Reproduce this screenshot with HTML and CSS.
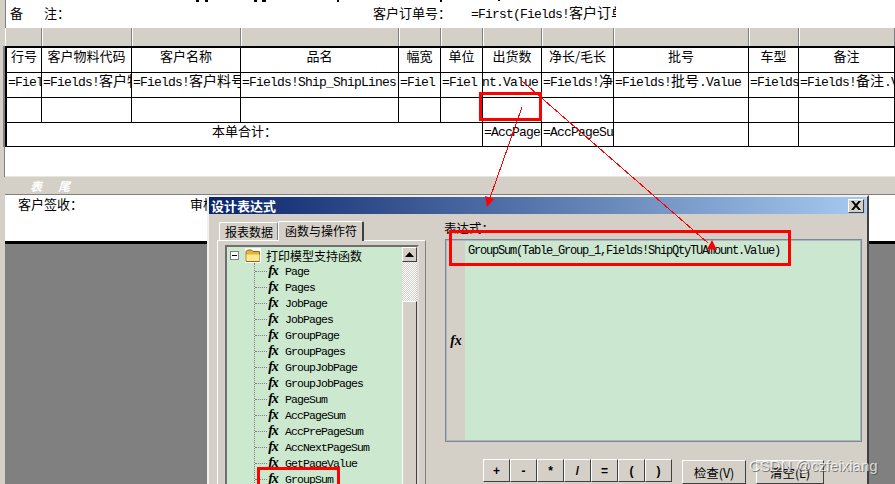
FILE: index.html
```html
<!DOCTYPE html>
<html lang="zh-CN">
<head>
<meta charset="utf-8">
<title>设计表达式</title>
<link rel="stylesheet" href="styles.css">
</head>
<body>
<div class="screen">
  <div class="report">
    <div class="head-line">
      <span class="note-a">备</span><span class="note-b">注：</span>
      <span class="order-label">客户订单号：</span>
      <span class="order-value">=First(Fields!<span class="zh">客户订单</span></span>
    </div>
    <div class="ruler">
      <i></i><i></i><i></i><i></i><i></i><i></i><i></i><i></i><i></i><i></i><i></i>
    </div>
    <div class="grid">
      <div class="cell hd">行号</div><div class="cell hd">客户物料代码</div><div class="cell hd">客户名称</div><div class="cell hd">品名</div><div class="cell hd">幅宽</div><div class="cell hd">单位</div><div class="cell hd">出货数</div><div class="cell hd">净长/毛长</div><div class="cell hd">批号</div><div class="cell hd">车型</div><div class="cell hd">备注</div>
      <div class="cell ex">=Fields</div><div class="cell ex">=Fields!<span class="zh">客户物料</span></div><div class="cell ex">=Fields!<span class="zh">客户料号</span></div><div class="cell ex">=Fields!Ship_ShipLines</div><div class="cell ex">=Fiel</div><div class="cell ex">=Fiel</div><div class="cell ex tail"><span>=Fields!ShipQtyTUAmount.Value</span></div><div class="cell ex">=Fields!<span class="zh">净长</span></div><div class="cell ex">=Fields!<span class="zh">批号</span>.Value</div><div class="cell ex">=Fields</div><div class="cell ex">=Fields!<span class="zh">备注</span>.Value</div>
      <div class="cell"></div><div class="cell"></div><div class="cell"></div><div class="cell"></div><div class="cell"></div><div class="cell"></div><div class="cell"></div><div class="cell"></div><div class="cell"></div><div class="cell"></div><div class="cell"></div>
      <div class="cell total span6 last">本单合计：</div><div class="cell ex last">=AccPageSum</div><div class="cell ex last">=AccPageSum</div><div class="cell last"></div><div class="cell last"></div><div class="cell last"></div>
    </div>
    <div class="blank"></div>
    <div class="band"><span>表</span><span>尾</span></div>
    <div class="footer"><span class="sign">客户签收：</span><span class="audit">审核：</span></div>
    <div class="empty"></div>
  </div>

  <section class="dialog">
    <header class="titlebar">
      <span>设计表达式</span>
      <button class="close" type="button" aria-label="关闭"><svg width="10" height="9" viewBox="0 0 10 9"><path d="M0 0h2.500L5 3l2.500-3H10L6.300 4.500 10 9H7.500L5 6 2.500 9H0l3.700-4.500z" fill="#000"/></svg></button>
    </header>
    <div class="dialog-body">
      <div class="left">
        <div class="tabs"><span class="tab">报表数据</span><span class="tab active">函数与操作符</span></div>
        <div class="tab-panel">
          <div class="tree">
            <div class="tree-list">
              <div class="root">
                <span class="minus"></span>
                <svg class="folder" width="16" height="15" viewBox="0 0 16 15"><path d="M1 3.500 2.500 2h4L8 3.500h6.500v10H1z" fill="#e8b23a" stroke="#8a6a1c"/><path d="M1.500 6.500h13v6.500h-13z" fill="#fde98f"/></svg>
                <span class="root-label">打印模型支持函数</span>
              </div>
              <ul class="funcs">
                <li><b>fx</b>Page</li>
                <li><b>fx</b>Pages</li>
                <li><b>fx</b>JobPage</li>
                <li><b>fx</b>JobPages</li>
                <li><b>fx</b>GroupPage</li>
                <li><b>fx</b>GroupPages</li>
                <li><b>fx</b>GroupJobPage</li>
                <li><b>fx</b>GroupJobPages</li>
                <li><b>fx</b>PageSum</li>
                <li><b>fx</b>AccPageSum</li>
                <li><b>fx</b>AccPrePageSum</li>
                <li><b>fx</b>AccNextPageSum</li>
                <li><b>fx</b>GetPageValue</li>
                <li><b>fx</b>GroupSum</li>
              </ul>
            </div>
            <div class="scrollbar">
              <span class="sb-btn"><svg width="9" height="5" viewBox="0 0 9 5"><path d="M4.500 0 9 5H0z" fill="#000"/></svg></span>
              <span class="sb-track"></span>
              <span class="sb-thumb"></span>
            </div>
          </div>
        </div>
      </div>
      <div class="expr-pane">
        <div class="expr-label">表达式：</div>
        <div class="expr-box">
          <div class="expr-gutter"><b>fx</b></div>
          <div class="expr-text">GroupSum(Table_Group_1,Fields!ShipQtyTUAmount.Value)</div>
        </div>
        <div class="actions">
          <div class="ops"><button type="button">+</button><button type="button">-</button><button type="button">*</button><button type="button">/</button><button type="button">=</button><button type="button">(</button><button type="button">)</button></div>
          <button class="act check" type="button">检查(V)</button>
          <button class="act clear" type="button">清空(L)</button>
        </div>
      </div>
    </div>
  </section>

  <svg class="marks" width="895" height="484" viewBox="0 0 895 484">
    <g fill="#000">
      <path d="M196 0h3v2h-3zM205 0h3v2h-3zM254 0h3v2h-3zM262 0h4v2h-4zM337 0h2v2h-2zM440 0h2v2h-2zM498 0h2v1h-2z"/>
    </g>
    <g fill="none" stroke="#f00" stroke-width="1" shape-rendering="crispEdges">
      <path d="M522 107 490 198"/>
      <path d="M521 80 708 243"/>
    </g>
    <g fill="#f00">
      <path d="M487 207 485 196 494 199z"/>
      <path d="M717 250 707 249 712 240z"/>
    </g>
    <g fill="none" stroke="#f00" stroke-width="3">
      <rect x="480.500" y="93.500" width="60" height="26"/>
      <rect x="450.500" y="231.500" width="339" height="33"/>
      <rect x="258.500" y="468.500" width="80" height="30"/>
    </g>
  </svg>
  <div class="watermark">CSDN @czfeixiang</div>
</div>
</body>
</html>
```
FILE: styles.css
```css
* { box-sizing: border-box; }
html, body { margin: 0; padding: 0; background: #d4d0c8; }
.screen {
  position: relative;
  width: 895px;
  height: 484px;
  overflow: hidden;
  font-family: "Noto Sans CJK SC", "Liberation Mono", monospace;
  font-size: 13px;
  color: #000;
}
.report { display: flex; flex-direction: column; height: 484px; }
.head-line {
  height: 28px;
  margin-left: 5px;
  padding-top: 4px;
  background: #fff;
  display: flex;
  line-height: 18px;
  white-space: nowrap;
  border-left: 1px solid #808080;
}
.note-a { margin-left: 4px; width: 34px; }
.note-b { width: 329px; }
.order-label { width: 98px; }
.order-value {
  font-family: "Liberation Mono", "Noto Sans CJK SC", monospace;
  font-size: 13px;
  letter-spacing: -.8px;
  width: 145px;
  padding-top: 2px;
  overflow: hidden;
}
.zh { font-family: "Noto Sans CJK SC", sans-serif; font-size: 14px; letter-spacing: 0; line-height: 0; }
.ruler {
  height: 18px;
  display: grid;
  grid-template-columns: 37px 90px 109px 158px 42px 42px 59px 72px 135px 50px 96px;
  margin-left: 5px;
  background: #fff;
}
.ruler i { background: #d4d0c8; border-left: 1px solid #fff; border-right: 1px solid #808080; }
.grid {
  display: grid;
  grid-template-columns: 37px 90px 109px 158px 42px 42px 59px 72px 135px 50px 96px;
  grid-template-rows: 25px 25px 25px 23px;
  margin-left: 5px;
  background: #fff;
  border-top: 2px solid #000;
  border-bottom: 1px solid #000;
  width: 890px;
  box-shadow: -2px 0 0 #808080;
}
.cell {
  border-right: 1px solid #000;
  border-bottom: 1px solid #000;
  overflow: hidden;
  white-space: nowrap;
  text-align: left;
  line-height: 16px;
}
.grid > .cell:nth-child(1), .grid > .cell:nth-child(12), .grid > .cell:nth-child(23), .grid > .span6 { border-left: 2px solid #000; }
.hd { text-align: center; }
.ex {
  font-family: "Liberation Mono", "Noto Sans CJK SC", monospace;
  font-size: 13px;
  letter-spacing: -.8px;
  padding: 1px 0 0 1px;
  line-height: 17px;
}
.tail { display: flex; justify-content: flex-end; padding-right: 3px; }
.tail span { flex: none; }
.span6 { grid-column: span 6; }
.total { text-align: center; line-height: 16px; padding-right: 0; padding-left: 0; }
.last { border-bottom: 0; }
.blank { height: 30px; background: #fff; margin-left: 5px; box-shadow: -1px 0 0 #808080; border-bottom: 1px solid #e9e6df; }
.band {
  height: 17px;
  margin-left: 6px;
  padding-left: 24px;
  display: flex;
  gap: 16px;
  color: #fff;
  font-style: italic;
  font-weight: 700;
  font-size: 12px;
  line-height: 18px;
}
.footer {
  height: 50px;
  margin-left: 5px;
  background: #fff;
  border-top: 1px solid #808080;
  border-bottom: 3px solid #000;
  display: flex;
  padding: 1px 0 0 13px;
  line-height: 16px;
}
.sign { width: 172px; }
.empty { flex: 1; background: #808080; margin-left: 5px; }

.dialog {
  position: absolute;
  left: 207px;
  top: 195px;
  width: 662px;
  height: 300px;
  background: #d4d0c8;
  border: 2px solid;
  border-color: #f2f0eb #404040 #404040 #f2f0eb;
  display: flex;
  flex-direction: column;
}
.titlebar {
  height: 18px;
  background: linear-gradient(90deg, #0a246a, #a6caf0);
  color: #fff;
  font-weight: 700;
  font-size: 13px;
  line-height: 17px;
  padding-left: 2px;
  margin-right: 1px;
  display: flex;
  justify-content: space-between;
  align-items: center;
}
.close {
  width: 16px;
  height: 14px;
  margin-right: 2px;
  padding: 0;
  background: #d4d0c8;
  border: 1px solid;
  border-color: #fff #404040 #404040 #fff;
  display: flex;
  align-items: center;
  justify-content: center;
}
.dialog-body { flex: 1; display: flex; }
.left { width: 214px; padding: 6px 0 0 8px; flex: none; }
.tabs { display: flex; align-items: flex-end; height: 20px; padding-left: 2px; font-size: 12px; }
.tab {
  height: 18px;
  width: 59px;
  padding: 0 0 0 5px;
  border: 1px solid #fff;
  border-right-color: #808080;
  border-bottom: 0;
  line-height: 17px;
  border-radius: 2px 2px 0 0;
  white-space: nowrap;
}
.tab.active { height: 20px; width: 86px; padding: 0 0 0 6px; background: #d4d0c8; border-right: 2px solid #404040; position: relative; top: 1px; }
.tab-panel {
  width: 209px;
  height: 260px;
  border: 1px solid;
  border-color: #fff #808080 #808080 #fff;
  padding: 4px 7px;
}
.tree {
  width: 194px;
  height: 250px;
  background: #cce8cf;
  border: 2px solid;
  border-color: #6f6f6f #e0ddd6 #e0ddd6 #6f6f6f;
  display: flex;
}
.tree-list { width: 175px; padding-left: 3px; overflow: hidden; flex: none; }
.root { display: flex; align-items: center; height: 16px; }
.minus { width: 9px; height: 9px; border: 1px solid #808080; background: #fff; position: relative; margin-right: 6px; flex: none; }
.minus::after { content: ""; position: absolute; left: 1px; right: 1px; top: 3px; height: 1px; background: #000; }
.folder { margin-right: 5px; background: #fff; flex: none; }
.root-label { font-size: 12px; white-space: nowrap; line-height: 15px; }
.funcs {
  list-style: none;
  margin: 0 0 0 24px;
  padding: 0;
  border-left: 1px dotted #808080;
}
.funcs li {
  height: 16px;
  display: flex;
  align-items: center;
  font-family: "Liberation Mono", monospace;
  font-size: 11.500px;
  letter-spacing: -.9px;
  white-space: nowrap;
}
.funcs li::before {
  content: "";
  width: 12px;
  flex: none;
  border-top: 1px dotted #808080;
}
.funcs li b {
  width: 12px;
  margin-right: 6px;
  flex: none;
  font-family: "Liberation Serif", serif;
  font-style: italic;
  font-weight: 700;
  font-size: 14px;
  letter-spacing: -1px;
  line-height: 14px;
  text-align: center;
}
.scrollbar { width: 15px; flex: none; display: flex; flex-direction: column; background: #d4d0c8; }
.sb-btn {
  height: 15px;
  background: #d4d0c8;
  border: 1px solid;
  border-color: #fff #404040 #404040 #fff;
  display: flex;
  align-items: center;
  justify-content: center;
  flex: none;
}
.sb-track {
  height: 39px;
  flex: none;
  background-color: #fff;
  background-image: repeating-conic-gradient(#d4d0c8 0 25%, #fff 0 50%);
  background-size: 2px 2px;
}
.sb-thumb { flex: 1; border: 1px solid; border-color: #fff #404040 #404040 #fff; }

.expr-pane { flex: 1; padding: 6px 0 0 22px; }
.expr-label { height: 19px; line-height: 16px; font-size: 12.500px; margin-left: -1px; }
.expr-box {
  width: 417px;
  height: 203px;
  display: flex;
  border: 1px solid #7c8894;
  padding: 1px;
  outline: 1px solid #aeb6c0;
  outline-offset: -2px;
  background: #cbe7cf;
}
.expr-gutter {
  width: 18px;
  background: #d4d0c8;
  display: flex;
  align-items: center;
  justify-content: center;
  margin-right: 3px;
  flex: none;
}
.expr-gutter b { font-family: "Liberation Serif", serif; font-style: italic; font-size: 14px; }
.expr-text {
  font-family: "Liberation Mono", monospace;
  font-size: 12px;
  letter-spacing: -1.200px;
  line-height: 18px;
  padding: 1px 0 0;
  white-space: nowrap;
}
.actions { display: flex; margin: 17px 0 0 38px; align-items: flex-start; }
.ops { display: flex; width: 189px; flex: none; }
.ops button, .act {
  height: 23px;
  padding: 0;
  background: #d4d0c8;
  border: 1px solid;
  border-color: #fff #404040 #404040 #fff;
  font-family: "Liberation Sans", sans-serif;
  font-weight: 700;
  font-size: 12px;
  color: #000;
}
.ops button { width: 27px; }
.act {
  height: 24px;
  margin-top: 1px;
  font-family: "Noto Sans CJK SC", sans-serif;
  font-weight: 400;
  font-size: 12.500px;
}
.check { width: 64px; margin-left: 10px; flex: none; }
.clear { width: 68px; margin-left: 10px; flex: none; }

.marks { position: absolute; left: 0; top: 0; pointer-events: none; }
.watermark {
  position: absolute;
  left: 749px;
  top: 457px;
  font-family: "Liberation Sans", sans-serif;
  font-size: 15px;
  line-height: 17px;
  color: rgba(255,255,255,.72);
  text-shadow: 1px 1px 0 rgba(70,70,70,.65);
  white-space: nowrap;
}
```
